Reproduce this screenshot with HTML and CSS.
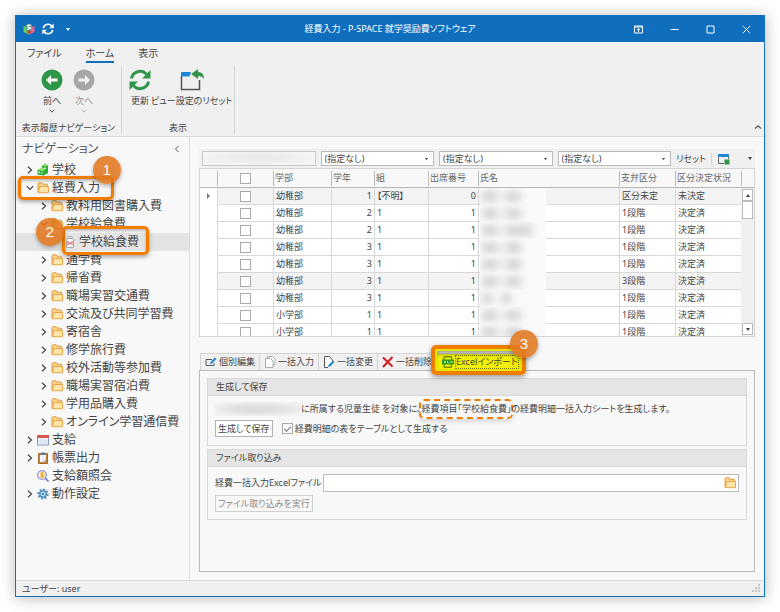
FILE: index.html
```html
<!DOCTYPE html>
<html lang="ja">
<head>
    <meta charset="UTF-8">
    <meta name="viewport" content="width=device-width, initial-scale=1.0">
    <title>経費入力 - P-SPACE 就学奨励費ソフトウェア</title>
    <link rel="stylesheet" href="styles.css">
</head>
<body>
    <!-- Shared icons -->
    <svg class="sprite" aria-hidden="true">
        <symbol id="folder" viewBox="0 0 12 12">
            <path d="M1 10.5V1.5L2 .8h3l1 1.4h4l.6.8v1.5" fill="#fbd38a" stroke="#e09a3c"/>
            <path d="M2.6 4.5h8.9v6.2H1.4z" fill="#fee4a8" stroke="#e6a548"/>
        </symbol>
        <symbol id="right" viewBox="0 0 8 8">
            <path d="M2 .8L5.5 4 2 7.2" fill="none" stroke="#444" stroke-width="1.2"/>
        </symbol>
        <symbol id="down" viewBox="0 0 8 8">
            <path d="M.8 2.2L4 5.5l3.2-3.3" fill="none" stroke="#444" stroke-width="1.2"/>
        </symbol>
        <symbol id="refresh" viewBox="0 0 22 22">
            <path d="M2.4 9.5A8.8 8.8 0 0 1 17.5 5.2M19.6 12.5A8.8 8.8 0 0 1 4.5 16.8" fill="none" stroke="currentColor" stroke-width="3"/>
            <path d="M21.5 1v8.5H13zM.5 21v-8.500H9z" fill="currentColor"/>
        </symbol>
    </svg>

    <div class="window">
        <header class="titlebar">
            <div class="quick">
                <svg class="logo" viewBox="0 0 12 12"><path d="M.5 3L6 5v6.500L.5 9z" fill="#5fd35a"/><path d="M11.500 3L6 5v6.500L11.500 9z" fill="#f0608a"/><path d="M3 2l3-1.500L9 2v5L6 8.500 3 7z" fill="#5a9b86"/><path d="M7.800 2.300Q4.300 1.600 4.500 3.200T7.200 4.800 4.200 6.500" fill="none" stroke="#fff" stroke-width="1.200"/><path d="M3.500 8.500L6 7.500l2.500 1L6 11z" fill="#d33b2e"/></svg>
                <button class="quick-btn" aria-label="更新"><svg width="12" height="12"><use href="#refresh"/></svg></button>
                <button class="quick-btn" aria-label="カスタマイズ"><span class="caret"></span></button>
            </div>
            <h1>経費入力 - P-SPACE 就学奨励費ソフトウェア</h1>
            <div class="win-buttons">
                <button aria-label="リボン表示"><svg width="9" height="9" viewBox="0 0 9 9"><path d="M.5 1h8v7h-8zM0 2h9" fill="none" stroke="#fff"/><path d="M4.500 7V4M3 5l1.500-1.500L6 5" fill="none" stroke="#fff"/></svg></button>
                <button aria-label="最小化"><svg width="9" height="9" viewBox="0 0 9 9"><path d="M.5 4.500h8" stroke="#fff"/></svg></button>
                <button aria-label="最大化"><svg width="9" height="9" viewBox="0 0 9 9"><path d="M1 1h7v7H1z" fill="none" stroke="#fff"/></svg></button>
                <button aria-label="閉じる"><svg width="9" height="9" viewBox="0 0 9 9"><path d="M.8.8l7.400 7.400M8.200.8L.8 8.200" stroke="#fff"/></svg></button>
            </div>
        </header>

        <div class="ribbon">
            <nav class="ribbon-tabs">
                <a href="#">ファイル</a>
                <a href="#" class="active">ホーム</a>
                <a href="#">表示</a>
            </nav>
            <div class="ribbon-groups">
                <section class="ribbon-group nav-group">
                    <div class="ribbon-items">
                        <button class="ribbon-btn">
                            <svg width="22" height="22" viewBox="0 0 22 22"><circle cx="11" cy="11" r="10.500" fill="#2f9649"/><path d="M5 11l5-5v3.500h6.500v3H10V16z" fill="#fff"/></svg>
                            前へ
                            <svg class="tick" width="6" height="6"><use href="#down"/></svg>
                        </button>
                        <button class="ribbon-btn" disabled>
                            <svg width="22" height="22" viewBox="0 0 22 22"><circle cx="11" cy="11" r="10.500" fill="#a6a6a6"/><path d="M17 11l-5-5v3.500H5.500v3H12V16z" fill="#f0f0f0"/></svg>
                            次へ
                            <svg class="tick" width="6" height="6"><use href="#down"/></svg>
                        </button>
                    </div>
                    <h2>表示履歴ナビゲーション</h2>
                </section>
                <section class="ribbon-group view-group">
                    <div class="ribbon-items">
                        <button class="ribbon-btn">
                            <svg class="green" width="22" height="22"><use href="#refresh"/></svg>
                            更新
                        </button>
                        <button class="ribbon-btn">
                            <svg width="24" height="22" viewBox="0 0 24 22"><path d="M1.500 7v13.500h18V11" fill="none" stroke="#555" stroke-width="1.500"/><path d="M1 3h10L9.500 7.500H1z" fill="#2087d2"/><path d="M11 5L18 0v3q6 0 6 7-2-3-6-3v3z" fill="#2f9649"/></svg>
                            ビュー設定のリセット
                        </button>
                    </div>
                    <h2>表示</h2>
                </section>
                <button class="collapse" aria-label="リボンを折りたたむ"><svg width="8" height="8" viewBox="0 0 8 8"><path d="M1 5.500L4 2.800l3 2.700" fill="none" stroke="#555" stroke-width="1.200"/></svg></button>
            </div>
        </div>

        <div class="main">
            <aside class="sidebar">
                <div class="sidebar-head">
                    <h2>ナビゲーション</h2>
                    <button aria-label="閉じる"><svg width="8" height="8" viewBox="0 0 8 8"><path d="M5.500 1L2.500 4l3 3" fill="none" stroke="#555"/></svg></button>
                </div>
                <ul class="tree">
                    <li><a href="#"><svg class="arrow"><use href="#right"/></svg><svg class="icon" viewBox="0 0 12 12"><path d="M.5 6L5 3.500V1.500L8 0l3 1.500V9l-4.500 2.500-6-1z" fill="#2fae36"/><path d="M.5 6L5 3.500l3 1L6.500 7z" fill="#9be66f"/><path d="M5 1.500L8 0l3 1.500-3 1z" fill="#8ade63"/><path d="M1.500 7.500h1.300V9H1.500zM4 8h1.300v1.500H4zM7.500 3.500H9V5H7.500z" fill="#fff"/></svg>学校</a></li>
                    <li class="marked">
                        <a href="#"><svg class="arrow"><use href="#down"/></svg><svg class="icon"><use href="#folder"/></svg>経費入力</a>
                        <span class="frame frame-input"></span><span class="badge badge-one">1</span>
                    </li>
                    <li class="sub"><a href="#"><svg class="arrow"><use href="#right"/></svg><svg class="icon"><use href="#folder"/></svg>教科用図書購入費</a></li>
                    <li class="sub"><a href="#"><svg class="arrow"><use href="#down"/></svg><svg class="icon"><use href="#folder"/></svg>学校給食費</a></li>
                    <li class="leaf marked selected">
                        <a href="#"><svg class="icon" viewBox="0 0 12 12"><path d="M4 .5h4v1.500l1.500 2v7.500h-7V4L4 2z" fill="#fff" stroke="#aaa"/><path d="M4 2.500h4" stroke="#999"/><path d="M4 9.500v-4L6 8l2-2.500v4" fill="none" stroke="#e0505a"/></svg>学校給食費</a>
                        <span class="frame frame-lunch"></span><span class="badge badge-two">2</span>
                    </li>
                    <li class="sub"><a href="#"><svg class="arrow"><use href="#right"/></svg><svg class="icon"><use href="#folder"/></svg>通学費</a></li>
                    <li class="sub"><a href="#"><svg class="arrow"><use href="#right"/></svg><svg class="icon"><use href="#folder"/></svg>帰省費</a></li>
                    <li class="sub"><a href="#"><svg class="arrow"><use href="#right"/></svg><svg class="icon"><use href="#folder"/></svg>職場実習交通費</a></li>
                    <li class="sub"><a href="#"><svg class="arrow"><use href="#right"/></svg><svg class="icon"><use href="#folder"/></svg>交流及び共同学習費</a></li>
                    <li class="sub"><a href="#"><svg class="arrow"><use href="#right"/></svg><svg class="icon"><use href="#folder"/></svg>寄宿舎</a></li>
                    <li class="sub"><a href="#"><svg class="arrow"><use href="#right"/></svg><svg class="icon"><use href="#folder"/></svg>修学旅行費</a></li>
                    <li class="sub"><a href="#"><svg class="arrow"><use href="#right"/></svg><svg class="icon"><use href="#folder"/></svg>校外活動等参加費</a></li>
                    <li class="sub"><a href="#"><svg class="arrow"><use href="#right"/></svg><svg class="icon"><use href="#folder"/></svg>職場実習宿泊費</a></li>
                    <li class="sub"><a href="#"><svg class="arrow"><use href="#right"/></svg><svg class="icon"><use href="#folder"/></svg>学用品購入費</a></li>
                    <li class="sub"><a href="#"><svg class="arrow"><use href="#right"/></svg><svg class="icon"><use href="#folder"/></svg>オンライン学習通信費</a></li>
                    <li><a href="#"><svg class="arrow"><use href="#right"/></svg><svg class="icon" viewBox="0 0 12 12"><path d="M.5 1.500h11v9.500H.5z" fill="#eef3fb" stroke="#8599bd"/><path d="M0 1h12v3H0z" fill="#d9594c"/><path d="M1 6.500h10M1 8.500h10M3.500 4v7M6 4v7M8.500 4v7" stroke="#c5d4ea" stroke-width=".5"/></svg>支給</a></li>
                    <li><a href="#"><svg class="arrow"><use href="#right"/></svg><svg class="icon" viewBox="0 0 12 12"><path d="M1.500 1.500h9v10h-9z" fill="#c88434" stroke="#a5662a"/><path d="M3 3h6v7H3z" fill="#f2f5fb"/><path d="M4 .5h4v2.500H4z" fill="#5a76a8"/><path d="M6 10h3V7z" fill="#93add5"/></svg>帳票出力</a></li>
                    <li><a href="#"><span class="arrow"></span><svg class="icon" viewBox="0 0 12 12"><circle cx="5" cy="5" r="4.300" fill="#fff0b8" stroke="#8c93ee" stroke-width="1.300"/><path d="M8.200 8.200l3.300 3.300" stroke="#7b80d8" stroke-width="1.800"/><path d="M6.500 3.300Q3.500 2.500 3.700 4T6.300 5.800 3.500 6.800M5 2v6" fill="none" stroke="#ea9a1c"/></svg>支給額照会</a></li>
                    <li><a href="#"><svg class="arrow"><use href="#right"/></svg><svg class="icon" viewBox="0 0 12 12"><circle cx="6" cy="6" r="4.800" fill="none" stroke="#4f8db8" stroke-width="1.600" stroke-dasharray="2 1.700"/><circle cx="6" cy="6" r="3.200" fill="#cfe6f5" stroke="#4a8fc0" stroke-width="1.500"/><circle cx="6" cy="6" r="1.200" fill="#3f7eaa"/></svg>動作設定</a></li>
                </ul>
            </aside>

            <div class="content">
                <div class="grid-panel">
                    <div class="filters">
                        <select class="filter-masked" aria-label="学校" disabled><option></option></select>
                        <select aria-label="学部"><option>(指定なし)</option></select>
                        <select aria-label="学年"><option>(指定なし)</option></select>
                        <select aria-label="組"><option>(指定なし)</option></select>
                        <button class="reset">リセット</button>
                        <button class="layout-btn" aria-label="レイアウト"><svg width="12" height="12" viewBox="0 0 12 12"><path d="M.5 1v9.500H6M10.500 2v4" fill="none" stroke="#666"/><path d="M0 1h11v3H0z" fill="#2087d2"/><path d="M6.500 6.500h5v5h-5z" fill="#2f9649"/></svg></button>
                        <button class="more" aria-label="その他"><span class="caret"></span></button>
                    </div>
                    <div class="grid-view">
                        <table>
                            <colgroup><col class="c-mark"><col class="c-check"><col class="c-dept"><col class="c-year"><col class="c-class"><col class="c-no"><col class="c-name"><col class="c-level"><col class="c-state"><col class="c-scroll"></colgroup>
                            <thead>
                                <tr><th></th><th class="check"><input type="checkbox" aria-label="すべて選択"></th><th>学部</th><th>学年</th><th>組</th><th>出席番号</th><th>氏名</th><th>支弁区分</th><th>区分決定状況</th><th></th></tr>
                            </thead>
                            <tbody>
                                <tr class="shaded"><td class="mark"><span class="pointer"></span></td><td class="check"><input type="checkbox" aria-label="選択"></td><td>幼稚部</td><td class="num">1</td><td>【不明】</td><td class="num">0</td><td class="name"><span class="mask"></span></td><td>区分未定</td><td>未決定</td><td></td></tr>
                                <tr><td class="mark"></td><td class="check"><input type="checkbox" aria-label="選択"></td><td>幼稚部</td><td class="num">2</td><td>1</td><td class="num">1</td><td class="name"><span class="mask"></span></td><td>1段階</td><td>決定済</td><td></td></tr>
                                <tr><td class="mark"></td><td class="check"><input type="checkbox" aria-label="選択"></td><td>幼稚部</td><td class="num">2</td><td>1</td><td class="num">1</td><td class="name"><span class="mask wide"></span></td><td>1段階</td><td>決定済</td><td></td></tr>
                                <tr><td class="mark"></td><td class="check"><input type="checkbox" aria-label="選択"></td><td>幼稚部</td><td class="num">3</td><td>1</td><td class="num">1</td><td class="name"><span class="mask"></span></td><td>1段階</td><td>決定済</td><td></td></tr>
                                <tr><td class="mark"></td><td class="check"><input type="checkbox" aria-label="選択"></td><td>幼稚部</td><td class="num">3</td><td>1</td><td class="num">1</td><td class="name"><span class="mask"></span></td><td>1段階</td><td>決定済</td><td></td></tr>
                                <tr class="shaded"><td class="mark"></td><td class="check"><input type="checkbox" aria-label="選択"></td><td>幼稚部</td><td class="num">3</td><td>1</td><td class="num">1</td><td class="name"><span class="mask"></span></td><td>3段階</td><td>決定済</td><td></td></tr>
                                <tr><td class="mark"></td><td class="check"><input type="checkbox" aria-label="選択"></td><td>幼稚部</td><td class="num">3</td><td>1</td><td class="num">1</td><td class="name"><span class="mask short"></span></td><td>1段階</td><td>決定済</td><td></td></tr>
                                <tr><td class="mark"></td><td class="check"><input type="checkbox" aria-label="選択"></td><td>小学部</td><td class="num">1</td><td>1</td><td class="num">1</td><td class="name"><span class="mask"></span></td><td>1段階</td><td>決定済</td><td></td></tr>
                                <tr><td class="mark"></td><td class="check"><input type="checkbox" aria-label="選択"></td><td>小学部</td><td class="num">1</td><td>1</td><td class="num">1</td><td class="name"><span class="mask"></span></td><td>1段階</td><td>決定済</td><td></td></tr>
                            </tbody>
                        </table>
                        <div class="scrollbar">
                            <button aria-label="上へ"><span class="caret up"></span></button>
                            <div class="thumb"></div>
                            <button aria-label="下へ"><span class="caret"></span></button>
                        </div>
                    </div>
                </div>

                <div class="tabs">
                    <button><svg width="12" height="12" viewBox="0 0 12 12"><path d="M7 3.500H1v6h8V7" fill="none" stroke="#555"/><path d="M5 8l.5-2L10 1.500 11.500 3 7 7.500z" fill="#2087d2"/></svg>個別編集</button>
                    <button><svg width="12" height="12" viewBox="0 0 12 12"><path d="M3.500.5h5l2.500 2.500v6H3.500z" fill="#fff" stroke="#aaa"/><path d="M1.500 2.500h5L9 5v6.500H1.500z" fill="#fff" stroke="#aaa"/></svg>一括入力</button>
                    <button><svg width="12" height="12" viewBox="0 0 12 12"><path d="M5 11.500H1.500v-11h5L9.500 4v1" fill="#fff" stroke="#555"/><path d="M5 11l.5-2L10 4.500 11.500 6 7 10.500z" fill="#2087d2"/></svg>一括変更</button>
                    <button><svg width="12" height="12" viewBox="0 0 12 12"><path d="M1 1.500l9.500 9M10.500 1L1 11" stroke="#cf2020" stroke-width="2"/></svg>一括削除</button>
                    <button class="active"><svg width="12" height="12" viewBox="0 0 12 12"><path d="M2 4V.8h7.500V4M2 8v3.200h7.500V8" fill="none" stroke="#3b6b12"/><path d="M0 3.500h12v5H0z" fill="#2d9a20"/><path d="M2 5l2 2M4 5L2 7M5.500 5v2H7M8.500 5l2 2m0-2l-2 2" fill="none" stroke="#d8ef9a" stroke-width=".7"/></svg><span class="focus">Excelインポート</span><span class="frame frame-tab"></span><span class="badge badge-three">3</span></button>
                </div>

                <div class="pane">
                    <section class="group">
                        <h3>生成して保存</h3>
                        <div class="group-body save-body">
                            <p><span class="mask-school"></span>に所属する児童生徒 を対象に、<span class="dashed">経費項目「学校給食費」</span>の経費明細一括入力シートを生成します。</p>
                            <div class="row">
                                <button class="btn">生成して保存</button>
                                <label><input type="checkbox" checked>経費明細の表をテーブルとして生成する</label>
                            </div>
                        </div>
                    </section>
                    <section class="group">
                        <h3>ファイル取り込み</h3>
                        <div class="group-body file-body">
                            <div class="row file-row">
                                <label for="excel-file">経費一括入力Excelファイル</label>
                                <div class="file-box">
                                    <input type="text" id="excel-file">
                                    <button aria-label="参照"><svg width="12" height="12"><use href="#folder"/></svg></button>
                                </div>
                            </div>
                            <button class="btn" disabled>ファイル取り込みを実行</button>
                        </div>
                    </section>
                </div>
            </div>
        </div>

        <footer class="statusbar">
            ユーザー: user
            <svg width="9" height="9" viewBox="0 0 9 9"><path d="M6 0h2v2H6zM3 3h2v2H3zM6 3h2v2H6zM0 6h2v2H0zM3 6h2v2H3zM6 6h2v2H6z" fill="#c4c4c4"/></svg>
        </footer>
    </div>
</body>
</html>
```
FILE: styles.css
```css
* {
    box-sizing: border-box;
}

body {
    margin: 0;
    padding: 15px;
    height: 100vh;
    background-color: #fff;
    color: #444;
    font-family: "Noto Sans", "Noto Sans CJK JP", sans-serif;
    font-size: 9px;
    line-height: 12px;
    font-feature-settings: "palt";
}

button,
input,
select {
    font: inherit;
    font-feature-settings: inherit;
    color: inherit;
    margin: 0;
    padding: 0;
    border: none;
    background: none;
}

h1,
h2,
h3,
p,
ul {
    margin: 0;
    padding: 0;
    font-size: inherit;
    font-weight: normal;
    list-style: none;
}

a {
    color: inherit;
    text-decoration: none;
}

svg {
    flex: none;
}

.sprite {
    position: absolute;
    width: 0;
    height: 0;
}

.window {
    display: flex;
    flex-direction: column;
    height: 100%;
    border: 1px solid #0f72c4;
    background-color: #f8f8f8;
    box-shadow: 0 1px 14px rgba(0, 0, 0, 0.28);
}

.caret {
    display: block;
    width: 0;
    height: 0;
    border: 2px solid transparent;
    border-top: 3px solid currentColor;
    border-bottom: none;
}

.caret.up {
    border-top: none;
    border-bottom: 3px solid currentColor;
}

/* Title bar */
.titlebar {
    display: grid;
    grid-template-columns: 1fr auto 1fr;
    align-items: center;
    flex: none;
    height: 26px;
    background-color: #106ebe;
    color: #fff;
}

.quick {
    display: flex;
    align-items: center;
    gap: 6px;
    padding-left: 7px;
}

.logo {
    width: 12px;
    height: 12px;
}

.quick-btn {
    display: flex;
    justify-content: center;
    width: 14px;
}

.win-buttons {
    display: flex;
    justify-content: flex-end;
}

.win-buttons button {
    display: flex;
    justify-content: center;
    width: 36px;
}

/* Ribbon */
.ribbon {
    flex: none;
    height: 95px;
    background-color: #f0f0f0;
    border-bottom: 1px solid #dcdcdc;
}

.ribbon-tabs {
    display: flex;
    gap: 24px;
    padding: 4px 11px 0;
    font-size: 10px;
    line-height: 14px;
}

.ribbon-tabs a {
    height: 17px;
    border-bottom: 2px solid transparent;
}

.ribbon-tabs .active {
    border-color: #106ebe;
}

.ribbon-groups {
    display: flex;
    height: 68px;
    margin-top: 3px;
}

.ribbon-group {
    display: flex;
    flex-direction: column;
    justify-content: space-between;
    border-right: 1px solid #d4d4d4;
    text-align: center;
}

.ribbon-group h2 {
    position: relative;
    padding-top: 2px;
}

.nav-group {
    width: 106px;
}

.view-group {
    width: 113px;
}

.ribbon-items {
    display: flex;
    justify-content: center;
    padding-top: 3px;
}

.nav-group .ribbon-items {
    gap: 10px;
    padding-right: 1px;
}

.view-group .ribbon-items {
    justify-content: flex-start;
    padding-left: 7px;
}

.ribbon-btn {
    display: flex;
    flex-direction: column;
    align-items: center;
    gap: 4px;
    white-space: nowrap;
}

.ribbon-btn:disabled {
    color: #999;
}

.ribbon-btn:disabled .tick {
    opacity: 0.4;
}

.tick {
    margin-top: -3px;
}

.green {
    color: #2f9649;
}

.collapse {
    align-self: flex-end;
    height: 12px;
    margin: 0 2px 0 auto;
}

/* Navigation tree */
.main {
    display: flex;
    flex: 1;
    min-height: 0;
}

.sidebar {
    flex: none;
    width: 174px;
    border-right: 1px solid #dcdcdc;
}

.sidebar-head {
    display: flex;
    align-items: center;
    justify-content: space-between;
    height: 24px;
    padding: 0 8px 0 6px;
    font-size: 12px;
    color: #555;
}

.tree {
    font-size: 12px;
}

.tree li {
    padding-left: 10px;
}

.tree .sub {
    padding-left: 24px;
}

.tree .leaf {
    padding-left: 48px;
}

.tree a {
    display: flex;
    align-items: center;
    height: 18px;
    white-space: nowrap;
}

.arrow {
    flex: none;
    width: 8px;
    height: 8px;
    margin-right: 3px;
}

.icon {
    width: 12px;
    height: 12px;
    margin-right: 3px;
}

.selected {
    background-color: #e4e4e4;
}

.marked {
    position: relative;
}

/* Numbered callouts */
.frame {
    position: absolute;
    z-index: 1;
    border: 3px solid #f07d00;
    border-radius: 5px;
    box-shadow: 0 2px 4px rgba(0, 0, 0, 0.35), inset 0 2px 3px rgba(0, 0, 0, 0.25);
}

.badge {
    position: absolute;
    z-index: 2;
    width: 28px;
    height: 28px;
    border-radius: 50%;
    background-color: rgba(224, 118, 28, 0.88);
    box-shadow: 0 2px 4px rgba(0, 0, 0, 0.3);
    color: #fff;
    font-family: "Liberation Sans", sans-serif;
    font-size: 15px;
    line-height: 27px;
    text-align: center;
}

.frame-input {
    inset: -3px auto -3px 2px;
    width: 96px;
}

.badge-one {
    top: -23px;
    left: 77px;
}

.frame-lunch {
    inset: -7px auto -4px 46px;
    width: 87px;
}

.badge-two {
    top: -15px;
    left: 20px;
}

/* Student grid */
.content {
    display: flex;
    flex-direction: column;
    flex: 1;
    min-width: 0;
    padding: 12px 9px 8px;
}

.grid-panel {
    flex: none;
}

.filters {
    display: flex;
    align-items: center;
    gap: 5px;
    height: 19px;
    padding: 0 3px;
    background-color: #f0f0f0;
}

.filters select {
    appearance: none;
    flex: 1;
    min-width: 0;
    height: 15px;
    padding: 0 3px;
    border: 1px solid #bbb;
    background: #fff conic-gradient(from -45deg at 50% 100%, #666 90deg, transparent 0) no-repeat right 4px center / 5px 2px;
    line-height: 12px;
}

.filters .filter-masked {
    background: radial-gradient(ellipse at center, #e9e9e9 20%, #f6f6f6 75%);
}

.filters .reset {
    white-space: nowrap;
}

.layout-btn {
    display: flex;
    padding-left: 6px;
    border-left: 1px solid #d4d4d4;
}

.filters .more {
    margin-left: 13px;
}

.grid-view {
    position: relative;
    height: 169px;
    overflow: hidden;
    border: 1px solid #d4d4d4;
    background-color: #fff;
}

.grid-view table {
    width: 100%;
    table-layout: fixed;
    border-collapse: separate;
    border-spacing: 0;
}

.c-mark {
    width: 17px;
}

.c-check {
    width: 56px;
}

.c-dept {
    width: 58px;
}

.c-year {
    width: 43px;
}

.c-class {
    width: 54px;
}

.c-no {
    width: 50px;
}

.c-level {
    width: 56px;
}

.c-state {
    width: 66px;
}

.c-scroll {
    width: 13px;
}

.grid-view th {
    height: 19px;
    padding: 0 2px;
    border-bottom: 1px solid #b8b8b8;
    background: #f8f8f8 linear-gradient(#bbb, #bbb) no-repeat left 2px / 1px 15px;
    color: #666;
    font-weight: normal;
    text-align: left;
    white-space: nowrap;
}

.grid-view th:first-child {
    background-image: none;
}

.grid-view td {
    height: 17px;
    padding: 0 2px;
    border-left: 1px solid #d8d8d8;
    border-bottom: 1px solid #d8d8d8;
    white-space: nowrap;
}

.grid-view .mark {
    border-left: none;
    border-bottom-color: transparent;
    background-color: #fff;
}

.grid-view .num {
    text-align: right;
}

.grid-view .check {
    text-align: center;
    line-height: 0;
}

.shaded td {
    background-color: #f3f3f3;
}

.pointer {
    display: block;
    width: 0;
    height: 0;
    margin-left: 5px;
    border: 3px solid transparent;
    border-left: 3px solid #777;
    border-right: none;
}

input[type="checkbox"] {
    appearance: none;
    width: 11px;
    height: 11px;
    border: 1px solid #aaa;
    background-color: #fff;
    vertical-align: middle;
}

input[type="checkbox"]:checked::before {
    content: "";
    display: block;
    width: 6px;
    height: 3px;
    margin: 2px 1px;
    border-left: 1px solid #777;
    border-bottom: 1px solid #777;
    transform: rotate(-45deg);
}

/* Personal names are blurred out */
.name {
    position: relative;
}

.mask {
    position: absolute;
    top: 0;
    left: 1px;
    width: 66px;
    height: 17px;
    overflow: hidden;
    background-color: #fafafa;
}

.mask::before {
    content: "";
    position: absolute;
    top: 4px;
    left: 2px;
    width: 16px;
    height: 9px;
    background-color: #ccc;
    box-shadow: 23px 0 #ccc;
    filter: blur(4px);
}

.mask.wide::before {
    box-shadow: 23px 0 #ccc, 34px 0 #ccc;
}

.mask.short::before {
    width: 10px;
    box-shadow: 19px 0 #ccc;
}

.scrollbar {
    position: absolute;
    inset: 19px 0 0 auto;
    display: flex;
    flex-direction: column;
    width: 13px;
    padding: 1px;
    background-color: #f0f0f0;
}

.scrollbar button {
    display: flex;
    align-items: center;
    justify-content: center;
    height: 12px;
    border: 1px solid #bbb;
    background-color: #fff;
}

.scrollbar button:last-child {
    margin-top: auto;
}

.thumb {
    height: 18px;
    border: 1px solid #bbb;
    background-color: #fff;
}

/* Tabs */
.tabs {
    display: flex;
    flex: none;
    margin-top: 16px;
    padding-left: 1px;
}

.tabs button {
    display: flex;
    align-items: center;
    gap: 2px;
    width: 59px;
    height: 17px;
    padding-left: 4px;
    border: 1px solid #d4d4d4;
    border-left-width: 0;
    border-bottom: none;
    background-color: #f0f0f0;
    white-space: nowrap;
}

.tabs button:first-child {
    width: 60px;
    border-left-width: 1px;
}

.tabs .active {
    position: relative;
    width: 84px;
    padding-left: 5px;
    background-color: #f0f000;
}

.tabs .active {
    gap: 1px;
}

.focus {
    border: 1px dotted #77770a;
}

.frame-tab {
    inset: -9px -6px -5px;
    border-width: 4px;
    box-shadow: 0 2px 5px rgba(0, 0, 0, 0.4), inset 0 0 0 2px #e6e600, inset 0 5px 4px rgba(0, 0, 0, 0.35);
}

.badge-three {
    top: -24px;
    right: -18px;
}

.pane {
    display: flex;
    flex-direction: column;
    gap: 3px;
    flex: 1;
    padding: 7px;
    border: 1px solid #bbb;
}

.group {
    border: 1px solid #d8d8d8;
}

.group h3 {
    height: 17px;
    padding: 2px 8px;
    border-bottom: 1px solid #d8d8d8;
    background-color: #e5e5e5;
}

.group-body {
    display: flex;
    flex-direction: column;
    align-items: flex-start;
    padding: 0 7px;
}

.save-body {
    gap: 4px;
    padding-top: 5px;
    padding-bottom: 8px;
}

.save-body p {
    display: flex;
    align-items: center;
    height: 15px;
    white-space: nowrap;
}

.file-body {
    gap: 3px;
    padding-top: 7px;
    padding-bottom: 7px;
}

.mask-school {
    width: 86px;
    height: 14px;
    background: radial-gradient(ellipse at center, #dedede 30%, #f2f2f2 80%);
}

.dashed {
    margin: 0 -2px;
    padding: 2px 0;
    border: 2px dashed #f07d00;
    border-radius: 5px;
    box-shadow: 0 3px 5px rgba(0, 0, 0, 0.12);
}

.row {
    display: flex;
    align-items: center;
    gap: 9px;
}

.row label {
    display: flex;
    align-items: center;
    gap: 2px;
    white-space: nowrap;
}

.btn {
    height: 17px;
    padding: 0 2px;
    border: 1px solid #b4b4b4;
    background-color: #fff;
    white-space: nowrap;
}

.btn:disabled {
    border-color: #d0d0d0;
    background-color: #f8f8f8;
    color: #888;
}

.file-row {
    align-self: stretch;
    gap: 2px;
}

.file-row label {
    flex: none;
}

.file-box {
    display: flex;
    align-items: center;
    flex: 1;
    height: 18px;
    padding-right: 2px;
    border: 1px solid #bbb;
    background-color: #fff;
}

.file-box input {
    flex: 1;
    min-width: 0;
    height: 100%;
    padding: 0 3px;
}

.file-box button {
    display: flex;
}

/* Status bar */
.statusbar {
    display: flex;
    align-items: center;
    justify-content: space-between;
    flex: none;
    height: 16px;
    padding: 0 3px 0 6px;
    border-top: 1px solid #d8d8d8;
    background-color: #f0f0f0;
}
```
